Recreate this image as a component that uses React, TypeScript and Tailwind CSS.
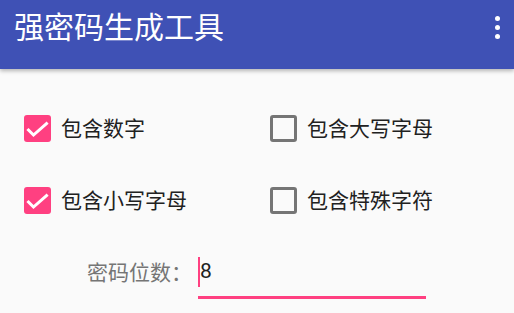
const OPTIONS = [
  { label: "包含数字", checked: true },
  { label: "包含大写字母", checked: false },
  { label: "包含小写字母", checked: true },
  { label: "包含特殊字符", checked: false },
];

function CheckBox({ checked }: { checked: boolean }) {
  if (checked) {
    return (
      <span className="grid h-[27px] w-[27px] shrink-0 place-items-center rounded-[3px] bg-[#ff4081]">
        <svg width="27" height="27" viewBox="0 0 27 27" fill="none">
          <polyline
            points="4.5,15 9.5,20 22.5,8.5"
            stroke="#ffffff"
            strokeWidth="3"
            strokeLinecap="square"
          />
        </svg>
      </span>
    );
  }
  return <span className="h-[27px] w-[27px] shrink-0 rounded-[3px] border-[3px] border-[#757575]" />;
}

export default function App() {
  return (
    <div className="h-[313px] w-full overflow-hidden bg-[#fafafa] font-['Roboto','Noto_Sans_CJK_SC',sans-serif]">
      <header className="relative z-10 h-[69px] bg-[#3f51b5] shadow-[0_2px_4px_rgba(0,0,0,0.28)]">
        <div className="flex h-[55px] items-center justify-between pl-[14px] pr-[14px]">
          <h1 className="text-[30px] leading-none text-white">强密码生成工具</h1>
          <div className="flex flex-col items-center gap-[4px]">
            <span className="h-[5px] w-[5px] rounded-full bg-white" />
            <span className="h-[5px] w-[5px] rounded-full bg-white" />
            <span className="h-[5px] w-[5px] rounded-full bg-white" />
          </div>
        </div>
      </header>

      <div className="grid grid-cols-[246px_1fr] gap-y-[45px] pl-[24px] pt-[46px]">
        {OPTIONS.map((o) => (
          <label key={o.label} className="flex h-[27px] items-center gap-[10px]">
            <CheckBox checked={o.checked} />
            <span className="mt-[1px] text-[21px] leading-none text-[#212121]">{o.label}</span>
          </label>
        ))}
      </div>

      <div className="mt-[40px] flex items-end pl-[87px]">
        <span className="mb-[15px] w-[111px] text-[21px] leading-none text-[#757575]">密码位数：</span>
        <div className="flex h-[45px] w-[228px] items-start border-b-[3px] border-[#ff4081]">
          <span className="mt-[3px] h-[30px] w-[2px] bg-[#ff4081]" />
          <span className="mt-[7px] text-[21px] leading-none text-[#212121]">8</span>
        </div>
      </div>
    </div>
  );
}
